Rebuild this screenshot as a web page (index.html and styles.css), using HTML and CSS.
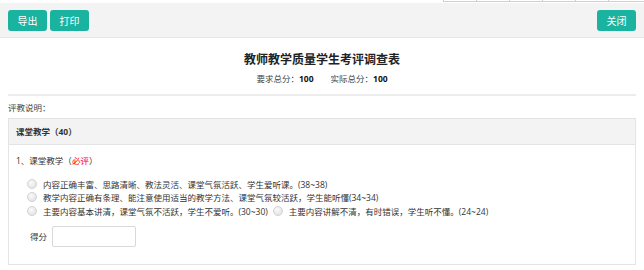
FILE: index.html
```html
<!DOCTYPE html>
<html lang="zh">
<head>
<meta charset="utf-8">
<title>教师教学质量学生考评调查表</title>
<link rel="stylesheet" href="styles.css">
</head>
<body>
<div class="top-strip">
  <div class="ghost-table"><span></span><span></span><span></span><span></span><span></span><span></span></div>
</div>
<div class="toolbar">
  <div class="btn-group">
    <button class="btn">导出</button>
    <button class="btn">打印</button>
  </div>
  <button class="btn">关闭</button>
</div>
<div class="head">
  <h1 class="title">教师教学质量学生考评调查表</h1>
  <div class="totals">
    <span>要求总分：<b>100</b></span>
    <span>实际总分：<b>100</b></span>
  </div>
</div>
<div class="content">
  <hr class="rule">
  <div class="note">评教说明：</div>
  <div class="panel">
    <div class="panel-head">课堂教学（40）</div>
    <div class="panel-body">
      <div class="question">1、课堂教学（<span class="req">必评</span>）</div>
      <div class="options">
        <label class="opt"><input type="radio" name="q1"><span>内容正确丰富、思路清晰、教法灵活、课堂气氛活跃、学生爱听课。(38~38)</span></label>
        <label class="opt"><input type="radio" name="q1"><span>教学内容正确有条理、能注意使用适当的教学方法、课堂气氛较活跃，学生能听懂(34~34)</span></label>
        <div class="opt-row">
          <label class="opt"><input type="radio" name="q1"><span>主要内容基本讲清，课堂气氛不活跃，学生不爱听。(30~30)</span></label>
          <label class="opt"><input type="radio" name="q1"><span>主要内容讲解不清，有时错误，学生听不懂。(24~24)</span></label>
        </div>
      </div>
      <div class="score">
        <span>得分</span>
        <input type="text" class="score-input">
      </div>
    </div>
  </div>
</div>
</body>
</html>
```
FILE: styles.css
```css
* { box-sizing: border-box; }
html, body { margin: 0; padding: 0; background: #fff; }
body {
  font-family: "Open Sans", "Noto Sans CJK SC", sans-serif;
  font-size: 8.5px;
  color: #333;
  width: 644px;
  height: 270px;
  overflow: hidden;
}
.top-strip {
  position: relative;
  height: 3px;
  background: #fff;
}
.ghost-table {
  position: absolute;
  top: 0;
  left: 443px;
  width: 201px;
  height: 2px;
  display: flex;
  border-bottom: 1px solid #cfcfcf;
}
.ghost-table span {
  width: 33px;
  height: 2px;
  border-left: 1px solid #cfcfcf;
}
.toolbar {
  height: 35px;
  background: #f3f3f3;
  border-bottom: 1px solid #e6e6e6;
  display: flex;
  justify-content: space-between;
  align-items: flex-start;
  padding: 7px 8px 0 8px;
}
.btn-group { display: flex; gap: 3px; }
.btn {
  width: 39px;
  height: 21px;
  border: none;
  border-radius: 3px;
  background: #1ab3a0;
  color: #fff;
  font-family: "Noto Sans CJK SC", sans-serif;
  font-size: 10px;
  padding: 0;
  line-height: 21px;
}
.head {
  text-align: center;
  padding-top: 14px;
}
.title {
  margin: 0;
  font-size: 12px;
  line-height: 16px;
  font-weight: bold;
  color: #222;
}
.totals {
  margin-top: 5px;
  line-height: 12px;
  display: flex;
  justify-content: center;
  gap: 17px;
  color: #444;
}
.totals b { color: #111; }
.content { padding: 0 8px; }
.rule {
  margin: 9px 0 0 0;
  border: none;
  height: 2px;
  background: #ececec;
}
.note {
  margin-top: 6px;
  line-height: 12px;
  color: #444;
}
.panel {
  margin-top: 4px;
  border: 1px solid #e4e4e4;
  height: 147px;
}
.panel-head {
  height: 26px;
  line-height: 26px;
  background: #f3f3f3;
  border-bottom: 1px solid #e4e4e4;
  padding-left: 7px;
  font-weight: bold;
  color: #333;
}
.panel-body { padding: 10px 7px 0 7px; }
.question { line-height: 12px; color: #333; }
.req { color: #f00; }
.options {
  margin-top: 10px;
  padding-left: 11px;
}
.opt-row { display: flex; gap: 5px; }
.opt {
  display: flex;
  align-items: center;
  height: 13.5px;
  color: #333;
}
.opt input {
  appearance: none;
  -webkit-appearance: none;
  margin: 0 6px 0 0;
  width: 10px;
  height: 10px;
  border: 1px solid #d2d2d2;
  border-radius: 50%;
  background: radial-gradient(circle at 40% 35%, #fafafa 0%, #e6e6e6 70%, #dcdcdc 100%);
  flex: none;
}
.score {
  margin-top: 8px;
  padding-left: 14px;
  display: flex;
  align-items: center;
  gap: 5px;
}
.score-input {
  width: 84px;
  height: 21px;
  border: 1px solid #d9d9d9;
  border-radius: 2px;
  background: #fff;
}
```
